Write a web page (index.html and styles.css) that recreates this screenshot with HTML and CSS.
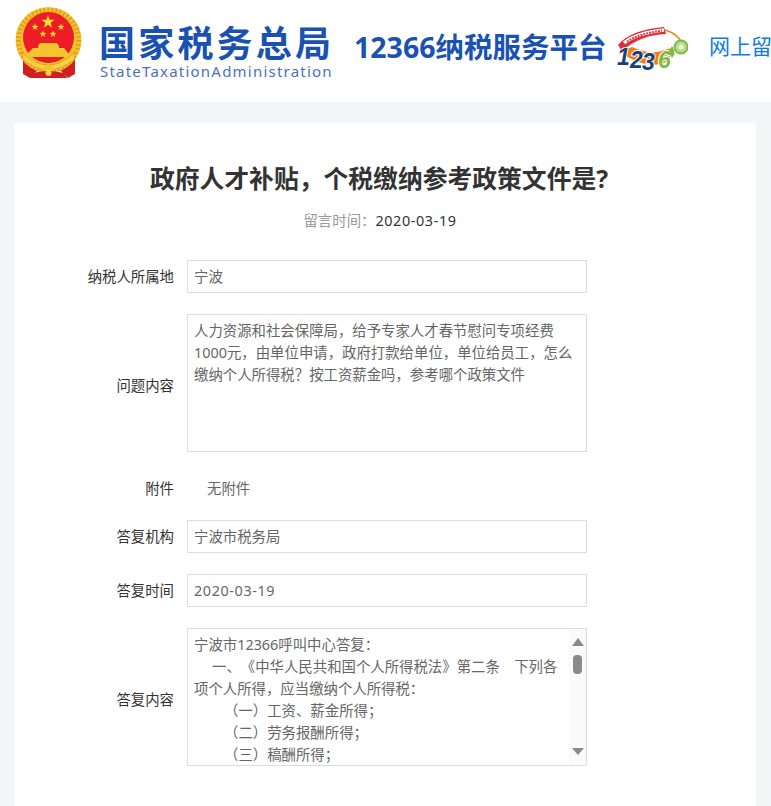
FILE: index.html
```html
<!DOCTYPE html>
<html lang="zh-CN">
<head>
    <meta charset="UTF-8">
    <meta name="viewport" content="width=device-width, initial-scale=1.0">
    <title>12366纳税服务平台 网上留言</title>
    <link rel="stylesheet" href="styles.css">
</head>
<body>
    <header class="header">
        <svg class="emblem" viewBox="0 0 68 72" width="68" height="72">
            <defs>
                <path id="star" d="M0 -1 L0.235 -0.324 L0.951 -0.309 L0.38 0.124 L0.588 0.809 L0 0.4 L-0.588 0.809 L-0.38 0.124 L-0.951 -0.309 L-0.235 -0.324 Z" fill="#fde02f"/>
            </defs>
            <path d="M8 50 L8 67 L15 71 L22 64 L46 64 L53 71 L60 67 L60 50 Z" fill="#d01f22"/>
            <circle cx="33.5" cy="33" r="33" fill="#f4c52f"/>
            <circle cx="33.5" cy="33" r="30" fill="none" stroke="#e3a21c" stroke-width="5" stroke-dasharray="2 2"/>
            <circle cx="33.5" cy="30.5" r="25.5" fill="#ee1c25"/>
            <use href="#star" transform="translate(33 15) scale(7)"/>
            <use href="#star" transform="translate(20 20) scale(3.6)"/>
            <use href="#star" transform="translate(46 20) scale(3.6)"/>
            <use href="#star" transform="translate(28 27) scale(3.6)"/>
            <use href="#star" transform="translate(38 27) scale(3.6)"/>
            <path d="M23 39 L25 36 L42 36 L44 39 L44 41 L49 41 L53 46 L53 50 L13 50 L13 46 L18 41 L23 41 Z" fill="#f4c52f"/>
            <path d="M8 46 Q33 70 59 46 L60 52 Q33 74 7 52 Z" fill="#f7cf45" stroke="#e3a21c" stroke-width="1"/>
            <circle cx="33.5" cy="64" r="6" fill="#f4c52f"/>
            <path d="M18 66 Q33 62 49 66 L52 71 L15 71 Z" fill="#d01f22"/>
            <circle cx="33.5" cy="66" r="3" fill="#f7cf45"/>
        </svg>
        <div class="brand">
            <div class="brand-name">国家税务总局</div>
            <div class="brand-en">StateTaxationAdministration</div>
        </div>
        <div class="platform">12366纳税服务平台</div>
        <svg class="hotline" viewBox="0 0 76 52" width="76" height="52">
            <path d="M53 4 Q68 8 72 22" fill="none" stroke="#f08a24" stroke-width="1.5"/>
            <path d="M8 26 Q30 42 50 38 Q60 34 60 22 L52 24 Q40 30 20 21 Z" fill="#f07f13"/>
            <path d="M6 19 Q18 4 52 1 L54 8 Q28 9 10 25 Z" fill="#e22c36"/>
            <path d="M12 17 Q24 7 52 4" fill="none" stroke="#fff" stroke-width="3.5"/>
            <path d="M15 15.5 Q26 8 50 4.6" fill="none" stroke="#d8394a" stroke-width="2" stroke-dasharray="2 1"/>
            <text class="digit-blue" x="5" y="39">1</text>
            <text class="digit-blue" x="18" y="42">2</text>
            <text class="digit-blue" x="30" y="44">3</text>
            <text class="digit-green" x="46" y="42">6</text>
            <circle cx="69" cy="21" r="6.5" fill="#b9dc8c" stroke="#7dbb45" stroke-width="2"/>
            <circle cx="69" cy="21" r="2.5" fill="#eaf5d8"/>
            <path d="M60 20 Q65 27 60 32 L57 26 Z" fill="#7dbb45"/>
        </svg>
        <a class="nav-link" href="#">网上留言</a>
    </header>

    <main class="card">
        <h1 class="title">政府人才补贴，个税缴纳参考政策文件是?</h1>
        <p class="meta"><span class="meta-label">留言时间：</span><span class="date">2020-03-19</span></p>

        <div class="row">
            <label class="row-label">纳税人所属地</label>
            <div class="field">宁波</div>
        </div>
        <div class="row">
            <label class="row-label label-low">问题内容</label>
            <div class="field field-area">人力资源和社会保障局，给予专家人才春节慰问专项经费1000元，由单位申请，政府打款给单位，单位给员工，怎么缴纳个人所得税？按工资薪金吗，参考哪个政策文件</div>
        </div>
        <div class="row row-plain">
            <label class="row-label">附件</label>
            <div class="plain-value">无附件</div>
        </div>
        <div class="row">
            <label class="row-label">答复机构</label>
            <div class="field">宁波市税务局</div>
        </div>
        <div class="row">
            <label class="row-label">答复时间</label>
            <div class="field date">2020-03-19</div>
        </div>
        <div class="row">
            <label class="row-label label-low">答复内容</label>
            <div class="field field-area field-scroll">
                <div class="scroll-text">
                    <p>宁波市12366呼叫中心答复：</p>
                    <p class="indent-1">一、《中华人民共和国个人所得税法》第二条　下列各项个人所得，应当缴纳个人所得税：</p>
                    <p class="indent-2">（一）工资、薪金所得；</p>
                    <p class="indent-2">（二）劳务报酬所得；</p>
                    <p class="indent-2">（三）稿酬所得；</p>
                </div>
                <div class="scrollbar">
                    <span class="arrow-up"></span>
                    <span class="thumb"></span>
                    <span class="arrow-down"></span>
                </div>
            </div>
        </div>
    </main>
</body>
</html>
```

FILE: styles.css
```css
html, body {
    height: 100%;
    overflow: hidden;
}
body {
    margin: 0;
    background-color: #f4f5f7;
    color: #333;
    font-family: "Noto Sans", "Noto Sans CJK SC", sans-serif;
    font-size: 14.4px;
    text-spacing-trim: space-all;
}
.header {
    display: flex;
    align-items: flex-start;
    height: 102px;
    background-color: #fff;
    white-space: nowrap;
    overflow: hidden;
}
.emblem {
    flex: none;
    margin: 7px 0 0 15px;
}
.brand {
    flex: none;
    width: 240px;
    margin: 20px 0 0 16px;
    color: #1a52b3;
}
.brand-name {
    font-size: 36px;
    line-height: 42px;
    font-weight: 700;
    letter-spacing: 3.2px;
    font-family: "Noto Sans CJK SC", sans-serif;
}
.brand-en {
    margin-left: 1px;
    font-size: 15px;
    line-height: 18px;
    letter-spacing: 1.22px;
    color: #4a70c0;
}
.platform {
    flex: none;
    width: 252px;
    margin: 27px 0 0 15px;
    font-size: 28.5px;
    line-height: 40px;
    font-weight: 700;
    color: #1a52b3;
}
.hotline {
    flex: none;
    margin: 26px 0 0 6px;
}
.digit-blue, .digit-green {
    font-family: "Liberation Sans", sans-serif;
    font-size: 23px;
    font-weight: 700;
    font-style: italic;
    stroke: #fff;
    stroke-width: 2px;
    paint-order: stroke;
}
.digit-blue {
    fill: #1d3f78;
}
.digit-green {
    fill: #7dbb45;
}
.nav-link {
    flex: none;
    margin: 30px 0 0 21px;
    font-size: 21px;
    line-height: 32px;
    color: #0f7ae5;
    text-decoration: none;
}
.card {
    width: 732px;
    margin: 21px 0 0 14px;
    padding-right: 10px;
    background-color: #fff;
    min-height: 700px;
    overflow: hidden;
}
.title {
    margin: 37px 2px 0 0;
    font-size: 24.8px;
    line-height: 36px;
    font-weight: 700;
    text-align: center;
    color: #333;
}
.meta {
    margin: 12px 0 0;
    line-height: 26px;
    text-align: center;
}
.meta-label {
    color: #999;
}
.date {
    letter-spacing: 0.6px;
}
.row {
    display: grid;
    grid-template-columns: 160px 400px;
    column-gap: 13px;
    align-items: center;
    margin-top: 21px;
}
.meta + .row {
    margin-top: 26px;
}
.row-label {
    line-height: 22px;
    text-align: right;
}
.label-low {
    padding-top: 6px;
}
.field {
    box-sizing: border-box;
    height: 33px;
    padding: 0 6px;
    border: 1px solid #ddd;
    line-height: 31px;
    color: #666;
}
.field-area {
    height: 138px;
    padding: 5px 6px;
    line-height: 22px;
}
.field-scroll {
    display: flex;
    padding: 5px 0 0 6px;
    overflow: hidden;
}
.scroll-text {
    flex: 1;
    min-width: 0;
}
.scroll-text p {
    margin: 0;
}
.indent-1 {
    text-indent: 18px;
}
.indent-2 {
    padding-left: 30px;
}
.scrollbar {
    flex: none;
    display: flex;
    flex-direction: column;
    align-items: center;
    box-sizing: border-box;
    width: 17px;
    height: 136px;
    margin-top: -5px;
    padding-top: 9px;
    background-color: #fafafa;
}
.arrow-up, .arrow-down {
    width: 0;
    height: 0;
    border-left: 6px solid transparent;
    border-right: 6px solid transparent;
}
.arrow-up {
    border-bottom: 8px solid #8a8a8a;
}
.arrow-down {
    margin-top: 74px;
    border-top: 7px solid #8a8a8a;
}
.thumb {
    width: 9px;
    height: 19px;
    margin-top: 9px;
    border-radius: 4px;
    background-color: #8a8a8a;
}
.row-plain {
    margin-top: 26px;
}
.row-plain + .row {
    margin-top: 20px;
}
.plain-value {
    padding-left: 20px;
    line-height: 22px;
    color: #666;
}
```
